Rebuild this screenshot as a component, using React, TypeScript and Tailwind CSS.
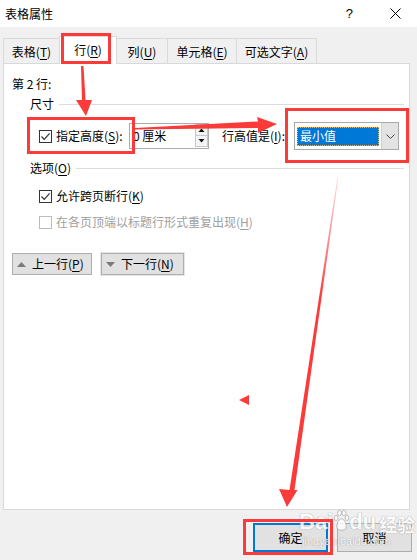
import React from "react";

const U = ({ c }: { c: string }) => (
  <span className="underline underline-offset-[2px] decoration-[1px]">{c}</span>
);

function CheckBox({ checked, disabled }: { checked?: boolean; disabled?: boolean }) {
  return (
    <div
      className={`w-[13px] h-[13px] border bg-white flex items-center justify-center shrink-0 ${
        disabled ? "border-[#bcbcbc]" : "border-[#333333]"
      }`}
    >
      {checked && (
        <svg width="11" height="11" viewBox="0 0 11 11">
          <path d="M1.5 5.5 L4.2 8.3 L9.6 2.4" fill="none" stroke="#333" strokeWidth="1.2" />
        </svg>
      )}
    </div>
  );
}

function Tab({ w, selected, first, children }: { w: string; selected?: boolean; first?: boolean; children: React.ReactNode }) {
  return (
    <div
      className={`${w} ${first ? "" : "-ml-px"} ${
        selected ? "h-[28px] -mb-px relative z-10 bg-white" : "h-[25px] bg-[#f0f0f0]"
      } border border-b-0 border-[#d9d9d9] flex items-center justify-center text-[12px] leading-[16px]`}
    >
      <span className={selected ? "-mt-[1px]" : "mt-[2px]"}>{children}</span>
    </div>
  );
}

export default function App() {
  return (
    <div className="relative w-[417px] h-[560px] bg-[#f0f0f0] overflow-hidden text-[12px] leading-[16px] text-black font-['Noto_Sans_CJK_SC','Noto_Sans',sans-serif]">
      {/* title bar */}
      <div className="h-[27px] bg-white flex items-center pl-[5px] pr-[16px]">
        <span className="text-[12px] leading-[16px]">表格属性</span>
        <span className="ml-auto text-[13px] leading-[16px] font-['Liberation_Sans',sans-serif]">?</span>
        <svg className="ml-[37px]" width="11" height="11" viewBox="0 0 11 11">
          <path d="M0.5 0.5 L10.5 10.5 M10.5 0.5 L0.5 10.5" stroke="#000" strokeWidth="1" />
        </svg>
      </div>

      {/* tabs */}
      <div className="h-[36px] flex items-end pl-[3px]">
        <Tab w="w-[57px]" first>
          表格(<U c="T" />)
        </Tab>
        <Tab w="w-[58px]" selected>
          行(<U c="R" />)
        </Tab>
        <Tab w="w-[52px]">
          列(<U c="U" />)
        </Tab>
        <Tab w="w-[70px]">
          单元格(<U c="E" />)
        </Tab>
        <Tab w="w-[81px]">
          可选文字(<U c="A" />)
        </Tab>
      </div>

      {/* panel */}
      <div className="ml-[3px] w-[407px] h-[447px] border border-[#d9d9d9] bg-white flex flex-col">
        <div className="mt-[12px] ml-[8px] h-[16px] whitespace-pre">第 2 行:</div>

        <div className="mt-[4px] h-[16px] flex items-center pl-[26px] pr-[5px]">
          <span>尺寸</span>
          <div className="flex-1 h-px bg-[#dcdcdc] ml-[5px]" />
        </div>

        <div className="mt-[10px] h-[28px] flex items-center pl-[35px]">
          <CheckBox checked />
          <div className="w-[77px] pl-[4px] whitespace-nowrap">
            指定高度(<U c="S" />):
          </div>
          <div className="w-[80px] h-[26px] border border-[#acacac] flex items-center bg-white">
            <span className="pl-[3px] flex-1">0 厘米</span>
            <div className="w-[13px] h-[24px] flex flex-col">
              <div className="h-[12px] border border-[#c8c8c8] bg-[#f4f4f4] flex items-center justify-center">
                <svg width="7" height="4" viewBox="0 0 7 4">
                  <path d="M0.5 4 L3.5 0.5 L6.5 4 Z" fill="#111" />
                </svg>
              </div>
              <div className="h-[12px] -mt-px border border-[#c8c8c8] bg-[#f4f4f4] flex items-center justify-center">
                <svg width="7" height="4" viewBox="0 0 7 4">
                  <path d="M0.5 0 L3.5 3.5 L6.5 0 Z" fill="#111" />
                </svg>
              </div>
            </div>
          </div>
          <div className="ml-[13px] w-[72px] whitespace-nowrap">
            行高值是(<U c="I" />):
          </div>
          <div className="w-[105px] h-[28px] border border-[#a8a8a8] bg-white flex items-stretch">
            <div className="flex-1 p-[2px] flex items-center">
              <div className="w-full h-[19px] bg-[#0078d7] border border-dotted border-[#ffb24a] text-white flex items-center pl-[2px]">
                最小值
              </div>
            </div>
            <div className="w-[17px] bg-[#e3e3e3] border-l border-[#d0d0d0] flex items-center justify-center">
              <svg width="9" height="5" viewBox="0 0 9 5">
                <path d="M0.5 0.5 L4.5 4.5 L8.5 0.5" fill="none" stroke="#444" strokeWidth="1" />
              </svg>
            </div>
          </div>
        </div>

        <div className="mt-[10px] h-[16px] flex items-center pl-[26px] pr-[5px]">
          <span className="whitespace-nowrap">
            选项(<U c="O" />)
          </span>
          <div className="flex-1 h-px bg-[#dcdcdc] ml-[5px]" />
        </div>

        <div className="mt-[12px] h-[16px] flex items-center pl-[35px] gap-[4px]">
          <CheckBox checked />
          <span>
            允许跨页断行(<U c="K" />)
          </span>
        </div>

        <div className="mt-[10px] h-[16px] flex items-center pl-[35px] gap-[4px] text-[#a0a0a0]">
          <CheckBox disabled />
          <span>
            在各页顶端以标题行形式重复出现(<U c="H" />)
          </span>
        </div>

        <div className="mt-[23px] h-[22px] flex pl-[8px]">
          <div className="w-[80px] h-[22px] border border-[#adadad] bg-[#e1e1e1] flex items-center">
            <svg className="ml-[4px]" width="9" height="5" viewBox="0 0 9 5">
              <path d="M0 5 L4.5 0 L9 5 Z" fill="#7a7a7a" />
            </svg>
            <span className="ml-[6px]">
              上一行(<U c="P" />)
            </span>
          </div>
          <div className="ml-[9px] w-[83px] h-[22px] border border-[#adadad] outline outline-1 outline-[#e6e6e6] bg-[#e1e1e1] flex items-center">
            <svg className="ml-[4px]" width="9" height="5" viewBox="0 0 9 5">
              <path d="M0 0 L4.5 5 L9 0 Z" fill="#7a7a7a" />
            </svg>
            <span className="ml-[6px]">
              下一行(<U c="N" />)
            </span>
          </div>
        </div>
      </div>

      {/* bottom buttons */}
      <div className="mt-[13px] flex justify-end pr-[5px] gap-[9px]">
        <div className="w-[75px] h-[29px] border-2 border-[#0078d7] bg-[#e1e1e1] flex items-center justify-center">
          确定
        </div>
        <div className="w-[75px] h-[29px] border border-[#adadad] bg-[#e1e1e1] flex items-center justify-center">
          取消
        </div>
      </div>

      {/* watermark */}
      <div className="absolute left-[299px] top-[508px] w-max whitespace-nowrap text-white opacity-80 [text-shadow:0_0_1px_#9a9a9a,0_0_1px_#9a9a9a] pointer-events-none">
        <div className="flex items-end leading-none whitespace-nowrap">
          <span className="font-['Liberation_Sans',sans-serif] font-bold text-[22px]">Bai</span>
          <svg width="16" height="24" viewBox="0 0 16 24" className="mb-[1px] shrink-0">
            <g fill="#ffffff" stroke="#a0a0a0" strokeWidth="0.8">
              <ellipse cx="3" cy="10" rx="2" ry="2.6" />
              <ellipse cx="6.5" cy="5" rx="2" ry="2.6" />
              <ellipse cx="11" cy="5" rx="2" ry="2.6" />
              <ellipse cx="14" cy="10" rx="1.8" ry="2.6" />
              <path d="M8.5 11 C5 11 3 17 4 20 C5 23 12 23 13 20 C14 17 12 11 8.5 11 Z" />
            </g>
          </svg>
          <span className="font-['Liberation_Sans',sans-serif] font-bold text-[22px]">du</span>
          <span className="ml-[3px] text-[18px] font-bold whitespace-nowrap">经验</span>
        </div>
        <div className="text-[11px] leading-[12px] font-['Liberation_Sans',sans-serif] mt-[2px] ml-[3px] whitespace-nowrap">
          jingyan.baidu.com
        </div>
      </div>

      {/* red annotation boxes */}
      <div className="absolute left-[61px] top-[33px] w-[50px] h-[31px] border-[3px] border-[#fb3a3a] pointer-events-none z-20" />
      <div className="absolute left-[27px] top-[117px] w-[108px] h-[37px] border-[3px] border-[#fb3a3a] pointer-events-none z-20" />
      <div className="absolute left-[285px] top-[108px] w-[124px] h-[55px] border-[3px] border-[#fb3a3a] pointer-events-none z-20" />
      <div className="absolute left-[243px] top-[519px] w-[90px] h-[36px] border-[3px] border-[#fb3a3a] pointer-events-none z-20" />

      {/* red arrows */}
      <svg className="absolute left-0 top-0 pointer-events-none z-30" width="417" height="560" viewBox="0 0 417 560">
        <defs>
          <linearGradient id="g3" x1="0" y1="177" x2="0" y2="300" gradientUnits="userSpaceOnUse">
            <stop offset="0" stopColor="#fb3a3a" stopOpacity="0.15" />
            <stop offset="1" stopColor="#fb3a3a" stopOpacity="1" />
          </linearGradient>
        </defs>
        <polygon points="81,66 83.5,66 85.5,100 92,100 86,116 76,100 82,100" fill="#fb3a3a" />
        <polygon points="135,128 135,129.5 258,128 258,133 277,124 257,117 258,121.5" fill="#fb3a3a" />
        <polygon points="337.5,177 338.5,177 294.5,490 297.5,490 287,507 279,489 289.5,490" fill="url(#g3)" />
        <polygon points="239,400 249,395 249,405" fill="#fb3a3a" />
      </svg>
    </div>
  );
}
